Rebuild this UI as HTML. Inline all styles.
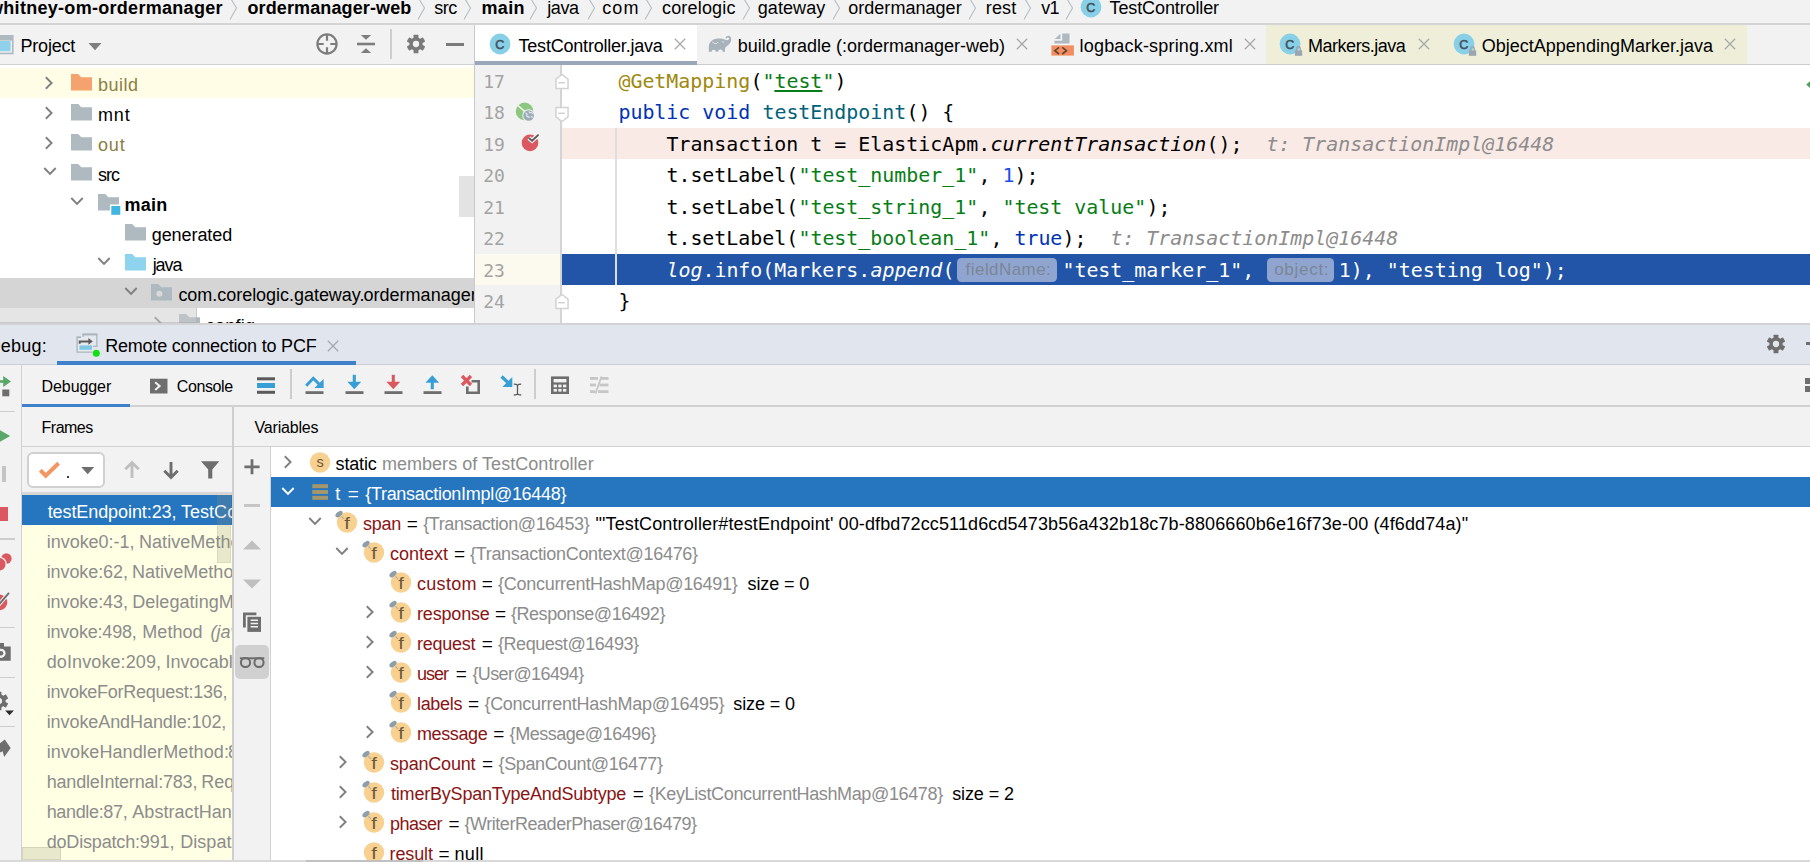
<!DOCTYPE html>
<html><head><meta charset="utf-8"><title>IDE debugger</title>
<style>
html,body{margin:0;padding:0}
body{width:1810px;height:862px;overflow:hidden;background:#f2f2f2;position:relative;font-family:'Liberation Sans', sans-serif}
#r{position:absolute;left:0;top:0;width:1810px;height:862px;overflow:hidden}
#r div,#r span,#r svg{position:absolute}
#r span{white-space:pre}
</style></head><body><div id="r">
<div style="left:0px;top:0px;width:1810px;height:23px;background:#f2f2f2;"></div>
<div style="left:0px;top:23px;width:1810px;height:2px;background:#d4d4d4;"></div>
<span style="left:-11px;top:-2.2px;font:700 18px 'Liberation Sans', sans-serif;line-height:20px;color:#000;letter-spacing:0.295px;">whitney-om-ordermanager</span>
<svg style="left:226.5px;top:-4px;" width="12" height="26" viewBox="0 0 12 26"><path d="M2.5 0.5 L9.5 12 L3 23.5" fill="none" stroke="#b4bcc4" stroke-width="1.1"/></svg>
<span style="left:247.5px;top:-2.2px;font:700 18px 'Liberation Sans', sans-serif;line-height:20px;color:#000;letter-spacing:0.12px;">ordermanager-web</span>
<svg style="left:414.5px;top:-4px;" width="12" height="26" viewBox="0 0 12 26"><path d="M2.5 0.5 L9.5 12 L3 23.5" fill="none" stroke="#b4bcc4" stroke-width="1.1"/></svg>
<span style="left:434.2px;top:-2.2px;font:400 18px 'Liberation Sans', sans-serif;line-height:20px;color:#000;letter-spacing:-0.45px;">src</span>
<svg style="left:461.3px;top:-4px;" width="12" height="26" viewBox="0 0 12 26"><path d="M2.5 0.5 L9.5 12 L3 23.5" fill="none" stroke="#b4bcc4" stroke-width="1.1"/></svg>
<span style="left:481.5px;top:-2.2px;font:700 18px 'Liberation Sans', sans-serif;line-height:20px;color:#000;letter-spacing:0.333px;">main</span>
<svg style="left:527px;top:-4px;" width="12" height="26" viewBox="0 0 12 26"><path d="M2.5 0.5 L9.5 12 L3 23.5" fill="none" stroke="#b4bcc4" stroke-width="1.1"/></svg>
<span style="left:547.3px;top:-2.2px;font:400 18px 'Liberation Sans', sans-serif;line-height:20px;color:#000;letter-spacing:-0.433px;">java</span>
<svg style="left:584.5px;top:-4px;" width="12" height="26" viewBox="0 0 12 26"><path d="M2.5 0.5 L9.5 12 L3 23.5" fill="none" stroke="#b4bcc4" stroke-width="1.1"/></svg>
<span style="left:602.3px;top:-2.2px;font:400 18px 'Liberation Sans', sans-serif;line-height:20px;color:#000;letter-spacing:1.05px;">com</span>
<svg style="left:641.6px;top:-4px;" width="12" height="26" viewBox="0 0 12 26"><path d="M2.5 0.5 L9.5 12 L3 23.5" fill="none" stroke="#b4bcc4" stroke-width="1.1"/></svg>
<span style="left:662px;top:-2.2px;font:400 18px 'Liberation Sans', sans-serif;line-height:20px;color:#000;letter-spacing:0.175px;">corelogic</span>
<svg style="left:740.2px;top:-4px;" width="12" height="26" viewBox="0 0 12 26"><path d="M2.5 0.5 L9.5 12 L3 23.5" fill="none" stroke="#b4bcc4" stroke-width="1.1"/></svg>
<span style="left:757.8px;top:-2.2px;font:400 18px 'Liberation Sans', sans-serif;line-height:20px;color:#000;letter-spacing:0.067px;">gateway</span>
<svg style="left:829.8px;top:-4px;" width="12" height="26" viewBox="0 0 12 26"><path d="M2.5 0.5 L9.5 12 L3 23.5" fill="none" stroke="#b4bcc4" stroke-width="1.1"/></svg>
<span style="left:848.2px;top:-2.2px;font:400 18px 'Liberation Sans', sans-serif;line-height:20px;color:#000;letter-spacing:0.036px;">ordermanager</span>
<svg style="left:966.4px;top:-4px;" width="12" height="26" viewBox="0 0 12 26"><path d="M2.5 0.5 L9.5 12 L3 23.5" fill="none" stroke="#b4bcc4" stroke-width="1.1"/></svg>
<span style="left:985.8px;top:-2.2px;font:400 18px 'Liberation Sans', sans-serif;line-height:20px;color:#000;letter-spacing:0.133px;">rest</span>
<svg style="left:1021px;top:-4px;" width="12" height="26" viewBox="0 0 12 26"><path d="M2.5 0.5 L9.5 12 L3 23.5" fill="none" stroke="#b4bcc4" stroke-width="1.1"/></svg>
<span style="left:1041.3px;top:-2.2px;font:400 18px 'Liberation Sans', sans-serif;line-height:20px;color:#000;letter-spacing:-0.7px;">v1</span>
<svg style="left:1063.4px;top:-4px;" width="12" height="26" viewBox="0 0 12 26"><path d="M2.5 0.5 L9.5 12 L3 23.5" fill="none" stroke="#b4bcc4" stroke-width="1.1"/></svg>
<svg style="left:1079.3px;top:-4.8px;" width="26" height="26" viewBox="0 0 26 26"><circle cx="12" cy="12" r="10.400" fill="#88cfe8"/><text x="11.900" y="16.500" text-anchor="middle" font-family="Liberation Sans, sans-serif" font-size="12.600" fill="#43525b" stroke="#43525b" stroke-width="0.550">C</text></svg>
<span style="left:1109.6px;top:-2.2px;font:400 18px 'Liberation Sans', sans-serif;line-height:20px;color:#000;letter-spacing:-0.123px;">TestController</span>
<div style="left:0px;top:25px;width:474px;height:39px;background:#f2f2f2;"></div>
<div style="left:0px;top:64px;width:474px;height:1px;background:#d1d1d1;"></div>
<div style="left:474px;top:25px;width:1px;height:298px;background:#c9c9c9;"></div>
<svg style="left:0px;top:34px;" width="15" height="22" viewBox="0 0 15 22"><rect x="-8" y="1" width="21.600" height="19.300" fill="#aeb9c0"/><rect x="-8" y="6.600" width="19.900" height="12" fill="#f4f6f7"/><rect x="-8" y="7" width="18.600" height="10.300" fill="#8fd0ea"/></svg>
<span style="left:20.5px;top:36.3px;font:400 18px 'Liberation Sans', sans-serif;line-height:20px;color:#000;letter-spacing:-0.2px;">Project</span>
<svg style="left:88px;top:40px;" width="16" height="12" viewBox="0 0 16 12"><path d="M0.500 2.900 H13.500 L7 10.200 Z" fill="#7f7f7f"/></svg>
<svg style="left:314px;top:31px;" width="26" height="26" viewBox="0 0 26 26"><circle cx="13" cy="13" r="9.6" fill="none" stroke="#7d7d7d" stroke-width="2.2"/><path d="M13 3.5v6.2M13 16.3v6.2M3.5 13h6.2M16.3 13h6.2" stroke="#7d7d7d" stroke-width="2.2"/></svg>
<svg style="left:355px;top:32px;" width="22" height="24" viewBox="0 0 22 24"><path d="M2 12h18" stroke="#7d7d7d" stroke-width="2.6"/><path d="M5.8 3h10.4L11 7.8Z M5.8 21h10.4L11 16.2Z" fill="#7d7d7d"/></svg>
<div style="left:390px;top:29px;width:2px;height:30px;background:#cdcdcd;"></div>
<svg style="left:404px;top:32px;" width="24" height="24" viewBox="0 0 24 24"><g transform="translate(12 12) scale(0.93)"><g fill="#7a7a7a"><rect x="-2.6" y="-10" width="5.2" height="20" rx="0.6" transform="rotate(0)"/><rect x="-2.6" y="-10" width="5.2" height="20" rx="0.6" transform="rotate(60)"/><rect x="-2.6" y="-10" width="5.2" height="20" rx="0.6" transform="rotate(120)"/></g><circle r="7.2" fill="#7a7a7a"/><circle r="3.4" fill="#f2f2f2"/></g></svg>
<div style="left:446px;top:42.5px;width:18px;height:3px;background:#7a7a7a;"></div>
<div style="left:0px;top:65px;width:474px;height:258px;overflow:hidden;background:#fff">
<div style="left:0px;top:3px;width:474px;height:30px;background:#fffde6;"></div>
<div style="left:0px;top:213px;width:474px;height:30px;background:#d5d5d5;"></div>
<svg style="left:43.3px;top:8.599999999999994px;" width="12" height="18" viewBox="0 0 12 18"><path d="M2.800 3.300 L8.600 9 L2.800 14.700" fill="none" stroke="#7f7f7f" stroke-width="1.900"/></svg>
<svg style="left:70.5px;top:9px;" width="24" height="22" viewBox="0 0 24 22"><path d="M0 0 H7.2 L10.3 3.3 H21 V16.4 H0 Z" fill="#f4a36f"/></svg>
<span style="left:97.9px;top:10px;font:400 18px 'Liberation Sans', sans-serif;line-height:20px;color:#8c7e42;letter-spacing:0.525px;">build</span>
<svg style="left:43.3px;top:38.599999999999994px;" width="12" height="18" viewBox="0 0 12 18"><path d="M2.800 3.300 L8.600 9 L2.800 14.700" fill="none" stroke="#7f7f7f" stroke-width="1.900"/></svg>
<svg style="left:70.5px;top:39px;" width="24" height="22" viewBox="0 0 24 22"><path d="M0 0 H7.2 L10.3 3.3 H21 V16.4 H0 Z" fill="#aeb9c0"/></svg>
<span style="left:97.9px;top:40px;font:400 18px 'Liberation Sans', sans-serif;line-height:20px;color:#000;letter-spacing:0.9px;">mnt</span>
<svg style="left:43.3px;top:68.6px;" width="12" height="18" viewBox="0 0 12 18"><path d="M2.800 3.300 L8.600 9 L2.800 14.700" fill="none" stroke="#7f7f7f" stroke-width="1.900"/></svg>
<svg style="left:70.5px;top:69px;" width="24" height="22" viewBox="0 0 24 22"><path d="M0 0 H7.2 L10.3 3.3 H21 V16.4 H0 Z" fill="#aeb9c0"/></svg>
<span style="left:97.9px;top:70px;font:400 18px 'Liberation Sans', sans-serif;line-height:20px;color:#8c7e42;letter-spacing:0.95px;">out</span>
<svg style="left:41.3px;top:100.19999999999999px;" width="18" height="12" viewBox="0 0 18 12"><path d="M3.300 3 L9 8.800 L14.700 3" fill="none" stroke="#7f7f7f" stroke-width="1.900"/></svg>
<svg style="left:70.5px;top:99px;" width="24" height="22" viewBox="0 0 24 22"><path d="M0 0 H7.2 L10.3 3.3 H21 V16.4 H0 Z" fill="#aeb9c0"/></svg>
<span style="left:97.9px;top:100px;font:400 18px 'Liberation Sans', sans-serif;line-height:20px;color:#000;letter-spacing:-0.95px;">src</span>
<svg style="left:68.3px;top:130.2px;" width="18" height="12" viewBox="0 0 18 12"><path d="M3.300 3 L9 8.800 L14.700 3" fill="none" stroke="#7f7f7f" stroke-width="1.900"/></svg>
<svg style="left:97.6px;top:129px;" width="24" height="22" viewBox="0 0 24 22"><path d="M0 0 H7.200 L10.300 3.300 H21 V10.600 H11.900 V16.400 H0 Z" fill="#aeb9c0"/><rect x="13.300" y="12" width="9" height="8.800" fill="#40b6e0"/></svg>
<span style="left:124.6px;top:130px;font:700 18px 'Liberation Sans', sans-serif;line-height:20px;color:#000;letter-spacing:0.233px;">main</span>
<svg style="left:124.6px;top:159px;" width="24" height="22" viewBox="0 0 24 22"><path d="M0 0 H7.2 L10.3 3.3 H21 V16.4 H0 Z" fill="#aeb9c0"/></svg>
<span style="left:151.7px;top:160px;font:400 18px 'Liberation Sans', sans-serif;line-height:20px;color:#000;letter-spacing:-0.062px;">generated</span>
<svg style="left:95.3px;top:190.2px;" width="18" height="12" viewBox="0 0 18 12"><path d="M3.300 3 L9 8.800 L14.700 3" fill="none" stroke="#7f7f7f" stroke-width="1.900"/></svg>
<svg style="left:124.6px;top:189px;" width="24" height="22" viewBox="0 0 24 22"><path d="M0 0 H7.2 L10.3 3.3 H21 V16.4 H0 Z" fill="#8fd4ee"/></svg>
<span style="left:152.7px;top:190px;font:400 18px 'Liberation Sans', sans-serif;line-height:20px;color:#000;letter-spacing:-1.1px;">java</span>
<svg style="left:122.30000000000001px;top:220.2px;" width="18" height="12" viewBox="0 0 18 12"><path d="M3.300 3 L9 8.800 L14.700 3" fill="none" stroke="#7f7f7f" stroke-width="1.900"/></svg>
<svg style="left:151.4px;top:219px;" width="24" height="22" viewBox="0 0 24 22"><path d="M0 0 H7.2 L10.3 3.3 H21 V16.4 H0 Z" fill="#aeb9c0"/><circle cx="8.400" cy="9.800" r="3" fill="#d9d9d9"/></svg>
<span style="left:178.4px;top:220px;font:400 18px 'Liberation Sans', sans-serif;line-height:20px;color:#000;letter-spacing:-0.033px;">com.corelogic.gateway.</span>
<span style="left:363.4px;top:220px;font:400 18px 'Liberation Sans', sans-serif;line-height:20px;color:#000;letter-spacing:0.036px;">ordermanager</span>
<svg style="left:151.5px;top:248.60000000000002px;" width="12" height="18" viewBox="0 0 12 18"><path d="M2.800 3.300 L8.600 9 L2.800 14.700" fill="none" stroke="#7f7f7f" stroke-width="1.900"/></svg>
<svg style="left:178.5px;top:249px;" width="24" height="22" viewBox="0 0 24 22"><path d="M0 0 H7.2 L10.3 3.3 H21 V16.4 H0 Z" fill="#aeb9c0"/></svg>
<span style="left:205.8px;top:250.6px;font:400 18px 'Liberation Sans', sans-serif;line-height:20px;color:#000;letter-spacing:0.24px;">config</span>
<div style="left:0px;top:243px;width:197px;height:14.5px;background:rgba(205,205,205,0.520);border-right:1px solid rgba(150,150,150,0.350);border-bottom:1px solid rgba(150,150,150,0.350);box-sizing:border-box"></div>
<div style="left:459px;top:110.5px;width:15px;height:41px;background:#e3e3e3;"></div>
</div>
<div style="left:0px;top:323px;width:1810px;height:2px;background:#d3d3d3;"></div>
<div style="left:475px;top:25px;width:1335px;height:36px;background:#f2f2f2;"></div>
<div style="left:475px;top:25px;width:222px;height:36px;background:#fff;"></div>
<div style="left:1265.7px;top:25px;width:481px;height:39px;background:#efefd9;"></div>
<div style="left:475px;top:64px;width:1335px;height:1px;background:#cccccc;"></div>
<div style="left:475px;top:65px;width:1335px;height:1px;background:#e2e2e2;"></div>
<div style="left:475px;top:61px;width:222px;height:4px;background:#9aa7bb;"></div>
<svg style="left:487.8px;top:32.2px;" width="26" height="26" viewBox="0 0 26 26"><circle cx="12" cy="12" r="10.400" fill="#88cfe8"/><text x="11.900" y="16.500" text-anchor="middle" font-family="Liberation Sans, sans-serif" font-size="12.600" fill="#43525b" stroke="#43525b" stroke-width="0.550">C</text></svg>
<span style="left:518.5px;top:35.8px;font:400 18px 'Liberation Sans', sans-serif;line-height:20px;color:#000;letter-spacing:-0.206px;">TestController.java</span>
<svg style="left:673px;top:37.3px;" width="14" height="14" viewBox="0 0 14 14"><path d="M1.8 1.8 L12.2 12.2 M12.2 1.8 L1.8 12.2" stroke="#a9a9a9" stroke-width="1.3" fill="none"/></svg>
<svg style="left:708px;top:35px;" width="25" height="19" viewBox="0 0 25 19"><path d="M0.800 16.800 V12 C0.800 8 3.500 4.600 8 3.800 C11 3.200 14.500 3.400 17 4.600 C18.500 5.400 20 5.600 20.800 4.600 C21.600 3.600 21 2.500 19.900 2.500 C19.200 2.500 18.800 2.900 18.600 3.400 L17.500 2.700 C17.900 1.600 19 0.800 20.300 0.800 C22.300 0.800 23.400 2.700 23.200 4.800 C22.900 7.500 21 9.800 18.800 11.200 C17.600 12 17 12.800 17 14 V16.800 H14.700 A2.300 2.300 0 0 0 10.100 16.800 H7.800 A2.100 2.100 0 0 0 3.600 16.800 Z" fill="#a7b2ba"/><path d="M4.600 6.600 C5.500 9.200 8.600 9.200 10.200 7" stroke="#f2f2f2" stroke-width="0.900" fill="none"/><circle cx="15" cy="7" r="0.700" fill="#f2f2f2"/></svg>
<span style="left:737.8px;top:35.8px;font:400 18px 'Liberation Sans', sans-serif;line-height:20px;color:#000;letter-spacing:0.006px;">build.gradle (:ordermanager-web)</span>
<svg style="left:1014.5px;top:37.3px;" width="14" height="14" viewBox="0 0 14 14"><path d="M1.8 1.8 L12.2 12.2 M12.2 1.8 L1.8 12.2" stroke="#a9a9a9" stroke-width="1.3" fill="none"/></svg>
<svg style="left:1050px;top:33px;" width="26" height="24" viewBox="0 0 26 24"><path d="M12.300 0.400 H19.500 V10.600 H4.400 V7.800 H12.300 Z" fill="#aeb8bf"/><path d="M4.800 5.900 L10.400 0.800 V5.900 Z" fill="#aeb8bf"/><rect x="1.400" y="12.400" width="22.500" height="10.200" fill="#f18d5f"/><path d="M9 14.300 L4.800 17.700 L9 21 M12.300 14.300 L16.500 17.700 L12.300 21" stroke="#5f4335" stroke-width="1.600" fill="none"/></svg>
<span style="left:1079.6px;top:35.8px;font:400 18px 'Liberation Sans', sans-serif;line-height:20px;color:#000;letter-spacing:0.182px;">logback-spring.xml</span>
<svg style="left:1243.4px;top:37.3px;" width="14" height="14" viewBox="0 0 14 14"><path d="M1.8 1.8 L12.2 12.2 M12.2 1.8 L1.8 12.2" stroke="#a9a9a9" stroke-width="1.3" fill="none"/></svg>
<svg style="left:1277.7px;top:32px;" width="26" height="26" viewBox="0 0 26 26"><circle cx="12" cy="12" r="10.400" fill="#88cfe8"/><text x="11.900" y="16.500" text-anchor="middle" font-family="Liberation Sans, sans-serif" font-size="12.600" fill="#43525b" stroke="#43525b" stroke-width="0.550">C</text><rect x="16.800" y="18.300" width="7.400" height="5.500" fill="#9aa5af"/><path d="M18.800 18.800v-2.300a1.700 1.700 0 0 1 3.400 0v2.300" fill="none" stroke="#9aa5af" stroke-width="1.400"/></svg>
<span style="left:1308px;top:35.8px;font:400 18px 'Liberation Sans', sans-serif;line-height:20px;color:#000;letter-spacing:-0.473px;">Markers.java</span>
<svg style="left:1417.2px;top:37.3px;" width="14" height="14" viewBox="0 0 14 14"><path d="M1.8 1.8 L12.2 12.2 M12.2 1.8 L1.8 12.2" stroke="#a9a9a9" stroke-width="1.3" fill="none"/></svg>
<svg style="left:1452px;top:32px;" width="26" height="26" viewBox="0 0 26 26"><circle cx="12" cy="12" r="10.400" fill="#88cfe8"/><text x="11.900" y="16.500" text-anchor="middle" font-family="Liberation Sans, sans-serif" font-size="12.600" fill="#43525b" stroke="#43525b" stroke-width="0.550">C</text><rect x="16.800" y="18.300" width="7.400" height="5.500" fill="#9aa5af"/><path d="M18.800 18.800v-2.300a1.700 1.700 0 0 1 3.400 0v2.300" fill="none" stroke="#9aa5af" stroke-width="1.400"/></svg>
<span style="left:1481.7px;top:35.8px;font:400 18px 'Liberation Sans', sans-serif;line-height:20px;color:#000;letter-spacing:0.012px;">ObjectAppendingMarker.java</span>
<svg style="left:1723.2px;top:37.3px;" width="14" height="14" viewBox="0 0 14 14"><path d="M1.8 1.8 L12.2 12.2 M12.2 1.8 L1.8 12.2" stroke="#a9a9a9" stroke-width="1.3" fill="none"/></svg>
<div style="left:475px;top:65px;width:86px;height:258px;background:#f2f2f2;"></div>
<div style="left:561px;top:65px;width:1249px;height:258px;background:#fff;"></div>
<div style="left:562px;top:128px;width:1248px;height:31px;background:#faeae6;"></div>
<div style="left:475px;top:254px;width:85px;height:31px;background:#fcfaee;"></div>
<div style="left:560px;top:65px;width:2px;height:258px;background:#d4d4d4;"></div>
<div style="left:562px;top:254px;width:1248px;height:31px;background:#2255a7;"></div>
<div style="left:615.3px;top:128px;width:1.6px;height:157px;background:#dedede;"></div>
<div style="left:615.3px;top:254px;width:1.6px;height:31px;background:#dcdcdc;"></div>
<span style="left:483.2px;top:70.9px;font:400 18px 'DejaVu Sans Mono', 'Liberation Mono', monospace;line-height:21px;color:#a3a3a3;letter-spacing:-0.04px;">17</span>
<span style="left:483.2px;top:102.4px;font:400 18px 'DejaVu Sans Mono', 'Liberation Mono', monospace;line-height:21px;color:#a3a3a3;letter-spacing:-0.04px;">18</span>
<span style="left:483.2px;top:133.9px;font:400 18px 'DejaVu Sans Mono', 'Liberation Mono', monospace;line-height:21px;color:#a3a3a3;letter-spacing:-0.04px;">19</span>
<span style="left:483.2px;top:165.4px;font:400 18px 'DejaVu Sans Mono', 'Liberation Mono', monospace;line-height:21px;color:#a3a3a3;letter-spacing:-0.04px;">20</span>
<span style="left:483.2px;top:196.9px;font:400 18px 'DejaVu Sans Mono', 'Liberation Mono', monospace;line-height:21px;color:#a3a3a3;letter-spacing:-0.04px;">21</span>
<span style="left:483.2px;top:228.4px;font:400 18px 'DejaVu Sans Mono', 'Liberation Mono', monospace;line-height:21px;color:#a3a3a3;letter-spacing:-0.04px;">22</span>
<span style="left:483.2px;top:259.9px;font:400 18px 'DejaVu Sans Mono', 'Liberation Mono', monospace;line-height:21px;color:#a3a3a3;letter-spacing:-0.04px;">23</span>
<span style="left:483.2px;top:291.4px;font:400 18px 'DejaVu Sans Mono', 'Liberation Mono', monospace;line-height:21px;color:#a3a3a3;letter-spacing:-0.04px;">24</span>
<span style="left:618.4px;top:69.9px;font:400 19.93px 'DejaVu Sans Mono', 'Liberation Mono', monospace;line-height:23px;color:#9e880d;">@GetMapping</span>
<span style="left:750.4px;top:69.9px;font:400 19.93px 'DejaVu Sans Mono', 'Liberation Mono', monospace;line-height:23px;color:#000;">(</span>
<span style="left:762.4px;top:69.9px;font:400 19.93px 'DejaVu Sans Mono', 'Liberation Mono', monospace;line-height:23px;color:#067d17;">"</span>
<span style="left:774.4px;top:69.9px;font:400 19.93px 'DejaVu Sans Mono', 'Liberation Mono', monospace;line-height:23px;color:#067d17;text-decoration:underline;text-decoration-thickness:1.5px;text-underline-offset:1.5px;">test</span>
<span style="left:822.4px;top:69.9px;font:400 19.93px 'DejaVu Sans Mono', 'Liberation Mono', monospace;line-height:23px;color:#067d17;">"</span>
<span style="left:834.4px;top:69.9px;font:400 19.93px 'DejaVu Sans Mono', 'Liberation Mono', monospace;line-height:23px;color:#000;">)</span>
<span style="left:618.4px;top:101.4px;font:400 19.93px 'DejaVu Sans Mono', 'Liberation Mono', monospace;line-height:23px;color:#0033b3;">public void </span>
<span style="left:762.4px;top:101.4px;font:400 19.93px 'DejaVu Sans Mono', 'Liberation Mono', monospace;line-height:23px;color:#00627a;">testEndpoint</span>
<span style="left:906.4px;top:101.4px;font:400 19.93px 'DejaVu Sans Mono', 'Liberation Mono', monospace;line-height:23px;color:#000;">() {</span>
<span style="left:666.4px;top:132.9px;font:400 19.93px 'DejaVu Sans Mono', 'Liberation Mono', monospace;line-height:23px;color:#000;">Transaction t = ElasticApm.</span>
<span style="left:990.4px;top:132.9px;font:italic 400 19.93px 'DejaVu Sans Mono', 'Liberation Mono', monospace;line-height:23px;color:#000;">currentTransaction</span>
<span style="left:1206.4px;top:132.9px;font:400 19.93px 'DejaVu Sans Mono', 'Liberation Mono', monospace;line-height:23px;color:#000;">();</span>
<span style="left:1266.4px;top:132.9px;font:italic 400 19.93px 'DejaVu Sans Mono', 'Liberation Mono', monospace;line-height:23px;color:#8c8c8c;">t: TransactionImpl@16448</span>
<span style="left:666.4px;top:164.4px;font:400 19.93px 'DejaVu Sans Mono', 'Liberation Mono', monospace;line-height:23px;color:#000;">t.setLabel(</span>
<span style="left:798.4px;top:164.4px;font:400 19.93px 'DejaVu Sans Mono', 'Liberation Mono', monospace;line-height:23px;color:#067d17;">"test_number_1"</span>
<span style="left:978.4px;top:164.4px;font:400 19.93px 'DejaVu Sans Mono', 'Liberation Mono', monospace;line-height:23px;color:#000;">, </span>
<span style="left:1002.4px;top:164.4px;font:400 19.93px 'DejaVu Sans Mono', 'Liberation Mono', monospace;line-height:23px;color:#1750eb;">1</span>
<span style="left:1014.4px;top:164.4px;font:400 19.93px 'DejaVu Sans Mono', 'Liberation Mono', monospace;line-height:23px;color:#000;">);</span>
<span style="left:666.4px;top:195.9px;font:400 19.93px 'DejaVu Sans Mono', 'Liberation Mono', monospace;line-height:23px;color:#000;">t.setLabel(</span>
<span style="left:798.4px;top:195.9px;font:400 19.93px 'DejaVu Sans Mono', 'Liberation Mono', monospace;line-height:23px;color:#067d17;">"test_string_1"</span>
<span style="left:978.4px;top:195.9px;font:400 19.93px 'DejaVu Sans Mono', 'Liberation Mono', monospace;line-height:23px;color:#000;">, </span>
<span style="left:1002.4px;top:195.9px;font:400 19.93px 'DejaVu Sans Mono', 'Liberation Mono', monospace;line-height:23px;color:#067d17;">"test value"</span>
<span style="left:1146.4px;top:195.9px;font:400 19.93px 'DejaVu Sans Mono', 'Liberation Mono', monospace;line-height:23px;color:#000;">);</span>
<span style="left:666.4px;top:227.4px;font:400 19.93px 'DejaVu Sans Mono', 'Liberation Mono', monospace;line-height:23px;color:#000;">t.setLabel(</span>
<span style="left:798.4px;top:227.4px;font:400 19.93px 'DejaVu Sans Mono', 'Liberation Mono', monospace;line-height:23px;color:#067d17;">"test_boolean_1"</span>
<span style="left:990.4px;top:227.4px;font:400 19.93px 'DejaVu Sans Mono', 'Liberation Mono', monospace;line-height:23px;color:#000;">, </span>
<span style="left:1014.4px;top:227.4px;font:400 19.93px 'DejaVu Sans Mono', 'Liberation Mono', monospace;line-height:23px;color:#0033b3;">true</span>
<span style="left:1062.4px;top:227.4px;font:400 19.93px 'DejaVu Sans Mono', 'Liberation Mono', monospace;line-height:23px;color:#000;">);</span>
<span style="left:1110.4px;top:227.4px;font:italic 400 19.93px 'DejaVu Sans Mono', 'Liberation Mono', monospace;line-height:23px;color:#8c8c8c;">t: TransactionImpl@16448</span>
<span style="left:666.4px;top:258.9px;font:italic 400 19.93px 'DejaVu Sans Mono', 'Liberation Mono', monospace;line-height:23px;color:#fff;">log</span>
<span style="left:702.4px;top:258.9px;font:400 19.93px 'DejaVu Sans Mono', 'Liberation Mono', monospace;line-height:23px;color:#fff;">.info(Markers.</span>
<span style="left:870.4px;top:258.9px;font:italic 400 19.93px 'DejaVu Sans Mono', 'Liberation Mono', monospace;line-height:23px;color:#fff;">append</span>
<span style="left:942.4px;top:258.9px;font:400 19.93px 'DejaVu Sans Mono', 'Liberation Mono', monospace;line-height:23px;color:#fff;">(</span>
<div style="left:957.2px;top:257.5px;width:100.3px;height:24.3px;background:#8fa5d0;border-radius:4.5px"></div>
<span style="left:965.6px;top:260.3px;font:400 17px 'Liberation Sans', sans-serif;line-height:19px;color:#7b8696;letter-spacing:0.444px;">fieldName:</span>
<span style="left:1062.4px;top:258.9px;font:400 19.93px 'DejaVu Sans Mono', 'Liberation Mono', monospace;line-height:23px;color:#fff;">"test_marker_1", </span>
<div style="left:1267.4px;top:257.5px;width:67.1px;height:24.3px;background:#8fa5d0;border-radius:4.5px"></div>
<span style="left:1274.2px;top:260.3px;font:400 17px 'Liberation Sans', sans-serif;line-height:19px;color:#7b8696;letter-spacing:0.717px;">object:</span>
<span style="left:1338.8px;top:258.9px;font:400 19.93px 'DejaVu Sans Mono', 'Liberation Mono', monospace;line-height:23px;color:#fff;">1), "testing log");</span>
<span style="left:618.4px;top:290.4px;font:400 19.93px 'DejaVu Sans Mono', 'Liberation Mono', monospace;line-height:23px;color:#000;">}</span>
<svg style="left:553.3px;top:72.3px;" width="18" height="20" viewBox="0 0 18 20"><path d="M2.950 16.550 V7.100 L9 2.500 L15.050 7.100 V16.550 Z" fill="#fff" stroke="#d2d2d2" stroke-width="1.500"/><path d="M5.200 10.700 H12" stroke="#d2d2d2" stroke-width="1.500"/></svg>
<svg style="left:553.3px;top:104.6px;" width="18" height="20" viewBox="0 0 18 20"><path d="M2.950 2.450 V11.900 L9 16.500 L15.050 11.900 V2.450 Z" fill="#fff" stroke="#d2d2d2" stroke-width="1.500"/><path d="M5.200 8.300 H12" stroke="#d2d2d2" stroke-width="1.500"/></svg>
<svg style="left:553.3px;top:292.1px;" width="18" height="20" viewBox="0 0 18 20"><path d="M2.950 16.550 V7.100 L9 2.500 L15.050 7.100 V16.550 Z" fill="#fff" stroke="#d2d2d2" stroke-width="1.500"/><path d="M5.200 10.700 H12" stroke="#d2d2d2" stroke-width="1.500"/></svg>
<svg style="left:514px;top:101px;" width="24" height="24" viewBox="0 0 24 24"><circle cx="10.600" cy="10.400" r="8.800" fill="#8cc77f"/><path d="M10.600 10.400 L3.800 4.400" stroke="#f2f2f2" stroke-width="1.500"/><circle cx="14.600" cy="14.500" r="6.300" fill="#f2f2f2"/><circle cx="14.600" cy="14.500" r="5.300" fill="#9aabb8"/><path d="M11.300 12.200 c1.300 -0.200 2 .8 1.500 1.800 s.3 1.700 1.200 1.500 s1.300 .6 .8 1.500 M15.200 10.300 c-.2 1 .6 1.500 1.500 1.300 s1.700 .4 2.300 1.200 M16.800 15.800 c.9 -.3 1.600 .1 1.700 1" stroke="#dfe6ea" stroke-width="1.300" fill="none"/></svg>
<svg style="left:519px;top:131px;" width="24" height="24" viewBox="0 0 24 24"><circle cx="11" cy="11.900" r="8.300" fill="#db5860"/><path d="M9.800 7 L13.100 9.700 L19.600 3.600" stroke="#f2f2f2" stroke-width="4.400" fill="none" stroke-linejoin="miter"/><path d="M9.800 7 L13.100 9.700 L19.600 3.600" stroke="#585858" stroke-width="1.800" fill="none"/></svg>
<svg style="left:1802px;top:78px;" width="8" height="14" viewBox="0 0 8 14"><path d="M4.200 6.600 L8 3.300 V9.900 Z" fill="#4ea35f"/></svg>
<div style="left:0px;top:325px;width:1810px;height:40px;background:#e1e5ee;"></div>
<div style="left:0px;top:364px;width:1810px;height:1px;background:#cbced4;"></div>
<div style="left:57px;top:360.6px;width:298.7px;height:4.2px;background:#3f80cb;"></div>
<span style="left:-12.5px;top:335.5px;font:400 18px 'Liberation Sans', sans-serif;line-height:20px;color:#000;letter-spacing:0.24px;">Debug:</span>
<svg style="left:75px;top:331px;" width="28" height="28" viewBox="0 0 28 28"><rect x="8.100" y="3.300" width="13.700" height="12" fill="#e4e8ee" stroke="#aab5bd" stroke-width="1.300"/><path d="M7.500 3.500 H22.400" stroke="#aab5bd" stroke-width="1.900"/><rect x="2.100" y="6" width="15.800" height="15.200" fill="#e6eaef"/><path d="M2.100 6 V21.200 H17.600" fill="none" stroke="#aab5bd" stroke-width="1.300"/><path d="M1.500 6.200 H6" stroke="#aab5bd" stroke-width="1.800"/><path d="M4.700 12.700 V10.500 H14" stroke="#5a5a5a" stroke-width="1.900" fill="none"/><path d="M13.400 7.100 L17.800 10.500 L13.400 13.800 Z" fill="#5a5a5a"/><rect x="4.500" y="14.400" width="12.500" height="4.400" fill="#7ec8e3"/><circle cx="21.300" cy="22.200" r="3.500" fill="#10e010"/></svg>
<span style="left:105.2px;top:335.5px;font:400 18px 'Liberation Sans', sans-serif;line-height:20px;color:#000;letter-spacing:-0.2px;">Remote connection to PCF</span>
<svg style="left:326px;top:339.2px;" width="14" height="14" viewBox="0 0 14 14"><path d="M1.8 1.8 L12.2 12.2 M12.2 1.8 L1.8 12.2" stroke="#a5a8ae" stroke-width="1.3" fill="none"/></svg>
<svg style="left:1764px;top:332px;" width="24" height="24" viewBox="0 0 24 24"><g transform="translate(12 12) scale(0.93)"><g fill="#6e6e6e"><rect x="-2.6" y="-10" width="5.2" height="20" rx="0.6" transform="rotate(0)"/><rect x="-2.6" y="-10" width="5.2" height="20" rx="0.6" transform="rotate(60)"/><rect x="-2.6" y="-10" width="5.2" height="20" rx="0.6" transform="rotate(120)"/></g><circle r="7.2" fill="#6e6e6e"/><circle r="3.4" fill="#e1e5ee"/></g></svg>
<div style="left:1806px;top:342.2px;width:6px;height:3px;background:#6e6e6e;"></div>
<div style="left:0px;top:365px;width:1810px;height:40px;background:#f2f2f2;"></div>
<div style="left:21px;top:365px;width:1px;height:497px;background:#d1d1d1;"></div>
<div style="left:22px;top:405px;width:1788px;height:1.6px;background:#d1d1d1;"></div>
<div style="left:22px;top:403.7px;width:108px;height:3.2px;background:#3f80cb;"></div>
<span style="left:41.6px;top:377.7px;font:400 16px 'Liberation Sans', sans-serif;line-height:17px;color:#000;letter-spacing:-0.086px;">Debugger</span>
<svg style="left:149px;top:377px;" width="20" height="18" viewBox="0 0 20 18"><rect x="1" y="1.700" width="17.500" height="14.800" fill="#6e6e6e"/><path d="M6.200 5.300 L10.600 9.100 L6.200 12.900" stroke="#f2f2f2" stroke-width="2" fill="none"/></svg>
<span style="left:176.7px;top:377.7px;font:400 16px 'Liberation Sans', sans-serif;line-height:17px;color:#000;letter-spacing:-0.367px;">Console</span>
<svg style="left:256px;top:376px;" width="20" height="20" viewBox="0 0 20 20"><rect x="1" y="1.300" width="18" height="3" fill="#5a5a5a"/><rect x="1" y="7" width="18" height="5" fill="#389fd6"/><rect x="1" y="14.800" width="18" height="3" fill="#5a5a5a"/></svg>
<div style="left:290.4px;top:369px;width:1.7px;height:29.5px;background:#cdcdcd;"></div>
<svg style="left:303.8px;top:374px;" width="22" height="22" viewBox="0 0 22 22"><rect x="1.500" y="17.200" width="18" height="2.800" fill="#6e6e6e"/><path d="M2.200 11.700 L9.300 4.300 L16 11" stroke="#389fd6" stroke-width="3" fill="none"/><path d="M10.400 13.900 H19.600 V4.900 Z" fill="#389fd6"/></svg>
<svg style="left:343.5px;top:374px;" width="22" height="22" viewBox="0 0 22 22"><rect x="1.500" y="17.200" width="18" height="2.800" fill="#6e6e6e"/><path d="M10.300 0.800 V10" stroke="#389fd6" stroke-width="3.100"/><path d="M3.400 7.800 H17.200 L10.300 15.200 Z" fill="#389fd6"/></svg>
<svg style="left:382.5px;top:374px;" width="22" height="22" viewBox="0 0 22 22"><rect x="1.500" y="17.200" width="18" height="2.800" fill="#6e6e6e"/><path d="M10.300 0.800 V10" stroke="#db5860" stroke-width="3.100"/><path d="M3.400 7.800 H17.200 L10.300 15.200 Z" fill="#db5860"/></svg>
<svg style="left:421.5px;top:374px;" width="22" height="22" viewBox="0 0 22 22"><rect x="1.500" y="17.200" width="18" height="2.800" fill="#6e6e6e"/><path d="M10.300 15.200 V6" stroke="#389fd6" stroke-width="3.100"/><path d="M3.400 8.700 H17.200 L10.300 1.300 Z" fill="#389fd6"/></svg>
<svg style="left:460px;top:374px;" width="22" height="22" viewBox="0 0 22 22"><path d="M2 2 L11 11 M11 2 L2 11" stroke="#db5860" stroke-width="3.300"/><path d="M11.500 7.300 H18.700 V18.700 H7.300 V12.500" stroke="#6e6e6e" stroke-width="2.600" fill="none"/></svg>
<svg style="left:499.5px;top:374px;" width="24" height="24" viewBox="0 0 24 24"><path d="M1.600 2.500 L9 9.600" stroke="#389fd6" stroke-width="3.300"/><path d="M12.300 3 V12.900 H2.400 Z" fill="#389fd6"/><path d="M13.800 10.100 C15.600 10.100 16.900 10.400 17.500 11.300 C18.100 10.400 19.400 10.100 21.200 10.100 M13.800 21 C15.600 21 16.900 20.700 17.500 19.800 C18.100 20.700 19.400 21 21.200 21 M17.500 11.300 V19.800" stroke="#5a5a5a" stroke-width="1.300" fill="none"/></svg>
<div style="left:534.4px;top:369px;width:1.7px;height:29.5px;background:#cdcdcd;"></div>
<svg style="left:550px;top:375px;" width="20" height="20" viewBox="0 0 20 20"><rect x="1" y="1.400" width="18" height="17.600" fill="#6e6e6e"/><rect x="3.600" y="4" width="12.800" height="3.400" fill="#f2f2f2"/><rect x="3.6" y="9.6" width="3.300" height="2.700" fill="#f2f2f2"/><rect x="3.6" y="13.899999999999999" width="3.300" height="2.700" fill="#f2f2f2"/><rect x="8.3" y="9.6" width="3.300" height="2.700" fill="#f2f2f2"/><rect x="8.3" y="13.899999999999999" width="3.300" height="2.700" fill="#f2f2f2"/><rect x="13.0" y="9.6" width="3.300" height="2.700" fill="#f2f2f2"/><rect x="13.0" y="13.899999999999999" width="3.300" height="2.700" fill="#f2f2f2"/></svg>
<svg style="left:589px;top:375px;" width="20" height="20" viewBox="0 0 20 20"><g fill="#c6c6c6"><rect x="1" y="2" width="8" height="2.800"/><rect x="12" y="2" width="7.500" height="2.800"/><rect x="1" y="8.600" width="6" height="2.800"/><rect x="10.500" y="8.600" width="9" height="2.800"/><rect x="1" y="15.200" width="5" height="2.800"/><rect x="9" y="15.200" width="10.500" height="2.800"/></g><path d="M12.500 1.500 L6.500 18.500" stroke="#c6c6c6" stroke-width="1.800"/></svg>
<div style="left:1805px;top:377.5px;width:6px;height:6px;background:#6e6e6e;"></div>
<div style="left:1805px;top:386px;width:6px;height:6.4px;background:#6e6e6e;"></div>
<svg style="left:0px;top:374px;" width="14" height="24" viewBox="0 0 14 24"><path d="M-4 7.500 H5" stroke="#59a869" stroke-width="2.600"/><path d="M3.200 2 L11 7.500 L3.200 13 Z" fill="#59a869"/><rect x="2.300" y="15.500" width="7" height="6.800" fill="#6e6e6e"/></svg>
<div style="left:0px;top:410.6px;width:14.5px;height:1.5px;background:#cdcdcd;"></div>
<svg style="left:0px;top:425px;" width="12" height="22" viewBox="0 0 12 22"><path d="M-6 2 L10.200 11 L-6 20 Z" fill="#59a869"/></svg>
<div style="left:1.5px;top:465.8px;width:4.3px;height:16.5px;background:#c4c4c4;"></div>
<div style="left:0px;top:506.8px;width:8.2px;height:14px;background:#db5860;"></div>
<div style="left:0px;top:538.2px;width:14.5px;height:1.5px;background:#cdcdcd;"></div>
<svg style="left:0px;top:550px;" width="14" height="24" viewBox="0 0 14 24"><circle cx="6.400" cy="8.500" r="5.200" fill="#db5860"/><circle cx="-0.800" cy="14.300" r="7" fill="#db5860" stroke="#f2f2f2" stroke-width="1.400"/></svg>
<svg style="left:0px;top:590px;" width="14" height="22" viewBox="0 0 14 22"><circle cx="-0.500" cy="12.400" r="7.800" fill="#db5860"/><path d="M-2 15.500 L9 2.800" stroke="#f2f2f2" stroke-width="4"/><path d="M-2 15.500 L9 2.800" stroke="#6e6e6e" stroke-width="1.900"/></svg>
<div style="left:0px;top:626.5px;width:14.5px;height:1.5px;background:#cdcdcd;"></div>
<svg style="left:0px;top:642px;" width="14" height="20" viewBox="0 0 14 20"><path d="M-8 4.500 H-1 V1 H4 V4.500 H10.700 V18.700 H-8 Z" fill="#6e6e6e"/><circle cx="1" cy="11.300" r="4.600" fill="#f2f2f2"/><circle cx="1" cy="11.300" r="2.300" fill="#6e6e6e"/></svg>
<div style="left:0px;top:676.5px;width:14.5px;height:1.5px;background:#cdcdcd;"></div>
<svg style="left:-13px;top:689px;" width="24" height="24" viewBox="0 0 24 24"><g transform="translate(12 12) scale(0.93)"><g fill="#6e6e6e"><rect x="-2.6" y="-10" width="5.2" height="20" rx="0.6" transform="rotate(0)"/><rect x="-2.6" y="-10" width="5.2" height="20" rx="0.6" transform="rotate(60)"/><rect x="-2.6" y="-10" width="5.2" height="20" rx="0.6" transform="rotate(120)"/></g><circle r="7.2" fill="#6e6e6e"/><circle r="3.4" fill="#f2f2f2"/></g></svg>
<svg style="left:5px;top:709.5px;" width="10" height="6" viewBox="0 0 10 6"><path d="M0.200 0.500 H8.900 L4.500 5.300 Z" fill="#2c2c2c"/></svg>
<div style="left:0px;top:725.5px;width:14.5px;height:1.5px;background:#cdcdcd;"></div>
<svg style="left:0px;top:738px;" width="14" height="20" viewBox="0 0 14 20"><path d="M-2 7 L4.800 1.400 L10.700 10 L4.200 19 L2.600 13.200 L-3 16 Z" fill="#6e6e6e"/></svg>
<div style="left:22px;top:406.6px;width:1788px;height:39.4px;background:#f2f2f2;"></div>
<div style="left:22px;top:446px;width:1788px;height:1px;background:#d1d1d1;"></div>
<span style="left:41.6px;top:418.7px;font:400 16px 'Liberation Sans', sans-serif;line-height:17px;color:#000;letter-spacing:-0.52px;">Frames</span>
<span style="left:254.5px;top:418.7px;font:400 16px 'Liberation Sans', sans-serif;line-height:17px;color:#000;letter-spacing:-0.188px;">Variables</span>
<div style="left:232px;top:407px;width:2px;height:455px;background:#cecece;"></div>
<div style="left:22px;top:447px;width:210px;height:45px;background:#f2f2f2;"></div>
<div style="left:22px;top:492px;width:210px;height:3px;background:#d6d6d6;"></div>
<div style="left:27px;top:452px;width:78px;height:36px;background:#fff;border:2px solid #d0d0d0;border-radius:6px;box-sizing:border-box"></div>
<svg style="left:37px;top:459px;" width="26" height="22" viewBox="0 0 26 22"><path d="M3.300 11.300 L8.700 16.600 L21.600 4.300" stroke="#f49661" stroke-width="4" fill="none"/></svg>
<div style="left:67px;top:476.3px;width:2.2px;height:2px;background:#3c3c3c;"></div>
<svg style="left:80px;top:465px;" width="16" height="11" viewBox="0 0 16 11"><path d="M1.300 2 H14.200 L7.700 9.300 Z" fill="#6e6e6e"/></svg>
<svg style="left:122.80000000000001px;top:460px;" width="18" height="20" viewBox="0 0 18 20"><path d="M9 18 V3 M2.300 9.300 L9 2.500 L15.700 9.300" stroke="#bfbfbf" stroke-width="2.900" fill="none"/></svg>
<svg style="left:162px;top:460px;" width="18" height="20" viewBox="0 0 18 20"><path d="M9 2 V17 M2.300 10.700 L9 17.500 L15.700 10.700" stroke="#6e6e6e" stroke-width="2.900" fill="none"/></svg>
<svg style="left:200px;top:460px;" width="22" height="20" viewBox="0 0 22 20"><path d="M1 1.200 H19.300 L12.300 9.500 V18.600 H8.200 V9.500 Z" fill="#6e6e6e"/></svg>
<div style="left:22px;top:495px;width:210px;height:365px;overflow:hidden;background:#ffffe4">
<div style="left:0px;top:0px;width:210px;height:30px;background:#2675bf;"></div>
<span style="left:25.7px;top:6.5px;font:400 18px 'Liberation Sans', sans-serif;line-height:20px;color:#fff;letter-spacing:-0.087px;">testEndpoint:23,</span>
<span style="left:158.9px;top:6.5px;font:400 18px 'Liberation Sans', sans-serif;line-height:20px;color:#fff;letter-spacing:0.05px;">TestController (com.corelogic.gateway.ordermanager.rest.v1)</span>
<span style="left:24.7px;top:36.5px;font:400 18px 'Liberation Sans', sans-serif;line-height:20px;color:#8c8c8c;letter-spacing:-0.02px;">invoke0:-1,</span>
<span style="left:117.0px;top:36.5px;font:400 18px 'Liberation Sans', sans-serif;line-height:20px;color:#8c8c8c;letter-spacing:0.05px;">NativeMethodAccessorImpl (jdk.internal.reflect)</span>
<span style="left:24.7px;top:66.5px;font:400 18px 'Liberation Sans', sans-serif;line-height:20px;color:#8c8c8c;letter-spacing:-0.089px;">invoke:62,</span>
<span style="left:109.9px;top:66.5px;font:400 18px 'Liberation Sans', sans-serif;line-height:20px;color:#8c8c8c;letter-spacing:0.05px;">NativeMethodAccessorImpl (jdk.internal.reflect)</span>
<span style="left:24.7px;top:96.5px;font:400 18px 'Liberation Sans', sans-serif;line-height:20px;color:#8c8c8c;letter-spacing:-0.089px;">invoke:43,</span>
<span style="left:110.2px;top:96.5px;font:400 18px 'Liberation Sans', sans-serif;line-height:20px;color:#8c8c8c;letter-spacing:0.05px;">DelegatingMethodAccessorImpl (jdk.internal.reflect)</span>
<span style="left:24.7px;top:126.5px;font:400 18px 'Liberation Sans', sans-serif;line-height:20px;color:#8c8c8c;letter-spacing:-0.2px;">invoke:498,</span>
<span style="left:120.3px;top:126.5px;font:400 18px 'Liberation Sans', sans-serif;line-height:20px;color:#8c8c8c;letter-spacing:0.05px;">Method</span>
<span style="left:188.5px;top:126.5px;font:italic 400 18px 'Liberation Sans', sans-serif;line-height:20px;color:#8c8c8c;">(java.lang.reflect)</span>
<span style="left:24.7px;top:156.5px;font:400 18px 'Liberation Sans', sans-serif;line-height:20px;color:#8c8c8c;letter-spacing:0.108px;">doInvoke:209,</span>
<span style="left:143.4px;top:156.5px;font:400 18px 'Liberation Sans', sans-serif;line-height:20px;color:#8c8c8c;letter-spacing:0.05px;">InvocableHandlerMethod (org.springframework.web.method.support)</span>
<span style="left:24.7px;top:186.5px;font:400 18px 'Liberation Sans', sans-serif;line-height:20px;color:#8c8c8c;letter-spacing:-0.27px;">invokeForRequest:136,</span>
<span style="left:209.7px;top:186.5px;font:400 18px 'Liberation Sans', sans-serif;line-height:20px;color:#8c8c8c;letter-spacing:0.05px;">InvocableHandlerMethod</span>
<span style="left:24.7px;top:216.5px;font:400 18px 'Liberation Sans', sans-serif;line-height:20px;color:#8c8c8c;letter-spacing:-0.079px;">invokeAndHandle:102,</span>
<span style="left:209.7px;top:216.5px;font:400 18px 'Liberation Sans', sans-serif;line-height:20px;color:#8c8c8c;letter-spacing:0.05px;">ServletInvocableHandlerMethod</span>
<span style="left:24.7px;top:246.5px;font:400 18px 'Liberation Sans', sans-serif;line-height:20px;color:#8c8c8c;letter-spacing:0.111px;">invokeHandlerMethod:</span>
<span style="left:206.0px;top:246.5px;font:400 18px 'Liberation Sans', sans-serif;line-height:20px;color:#8c8c8c;letter-spacing:0.05px;">878, RequestMappingHandlerAdapter</span>
<span style="left:24.7px;top:276.5px;font:400 18px 'Liberation Sans', sans-serif;line-height:20px;color:#8c8c8c;letter-spacing:-0.189px;">handleInternal:783,</span>
<span style="left:179.2px;top:276.5px;font:400 18px 'Liberation Sans', sans-serif;line-height:20px;color:#8c8c8c;letter-spacing:0.05px;">RequestMappingHandlerAdapter</span>
<span style="left:24.7px;top:306.5px;font:400 18px 'Liberation Sans', sans-serif;line-height:20px;color:#8c8c8c;letter-spacing:-0.344px;">handle:87,</span>
<span style="left:110.3px;top:306.5px;font:400 18px 'Liberation Sans', sans-serif;line-height:20px;color:#8c8c8c;letter-spacing:0.05px;">AbstractHandlerMethodAdapter</span>
<span style="left:24.7px;top:336.5px;font:400 18px 'Liberation Sans', sans-serif;line-height:20px;color:#8c8c8c;letter-spacing:-0.171px;">doDispatch:991,</span>
<span style="left:158.2px;top:336.5px;font:400 18px 'Liberation Sans', sans-serif;line-height:20px;color:#8c8c8c;letter-spacing:0.05px;">DispatcherServlet</span>
<div style="left:195px;top:0px;width:13.5px;height:67.7px;background:rgba(150,150,120,0.22);border:1px solid rgba(120,120,100,0.12);box-sizing:border-box"></div>
<div style="left:0px;top:351.5px;width:38.5px;height:13px;background:rgba(150,150,120,0.22);border:1px solid rgba(120,120,100,0.18);box-sizing:border-box"></div>
</div>
<div style="left:234px;top:447px;width:36px;height:413px;background:#f2f2f2;"></div>
<div style="left:270px;top:447px;width:1px;height:413px;background:#d1d1d1;"></div>
<svg style="left:242px;top:457px;" width="20" height="20" viewBox="0 0 20 20"><path d="M10 2.200 V17.300 M2.400 9.800 H17.600" stroke="#6e6e6e" stroke-width="2.800"/></svg>
<div style="left:244px;top:504.3px;width:15.5px;height:3px;background:#c6c6c6;"></div>
<svg style="left:242px;top:539px;" width="20" height="12" viewBox="0 0 20 12"><path d="M1 10.500 L10 1.500 L19 10.500 Z" fill="#bfbfbf"/></svg>
<svg style="left:242px;top:578px;" width="20" height="12" viewBox="0 0 20 12"><path d="M1 1.500 L10 10.500 L19 1.500 Z" fill="#bfbfbf"/></svg>
<svg style="left:241px;top:610px;" width="22" height="24" viewBox="0 0 22 24"><path d="M3.400 17.500 V3.800 H15.400" stroke="#6e6e6e" stroke-width="2.800" fill="none"/><rect x="6.400" y="6.800" width="13.600" height="15.100" fill="#6e6e6e"/><path d="M9.600 10.200 H17 M9.600 13.500 H17 M9.600 16.800 H17" stroke="#f2f2f2" stroke-width="1.400"/></svg>
<div style="left:235.2px;top:645px;width:33.7px;height:33.6px;background:#d0d0d0;border-radius:5px"></div>
<svg style="left:239px;top:654px;" width="27" height="16" viewBox="0 0 27 16"><path d="M0.900 4.300 H25.300" stroke="#6a6a6a" stroke-width="2"/><ellipse cx="6.500" cy="8.600" rx="4.600" ry="4.500" fill="none" stroke="#6a6a6a" stroke-width="2"/><ellipse cx="20" cy="8.600" rx="4.600" ry="4.500" fill="none" stroke="#6a6a6a" stroke-width="2"/></svg>
<div style="left:271px;top:447px;width:1539px;height:413px;background:#fff;"></div>
<div style="left:271px;top:477px;width:1539px;height:30px;background:#2675bf;"></div>
<svg style="left:282.3px;top:453px;" width="12" height="18" viewBox="0 0 12 18"><path d="M2.800 3.300 L8.600 9 L2.800 14.700" fill="none" stroke="#7f7f7f" stroke-width="1.900"/></svg>
<svg style="left:307.0px;top:449.2px;" width="26" height="26" viewBox="0 0 26 26"><circle cx="13" cy="13.500" r="10.200" fill="#f8d08f"/><text x="13" y="17.7" text-anchor="middle" transform="translate(13 0) scale(1 1) translate(-13 0)" font-family="Liberation Sans, sans-serif" font-size="14.5" fill="#6a583b">s</text></svg>
<span style="left:335.6px;top:453.7px;font:400 18px 'Liberation Sans', sans-serif;line-height:20px;color:#000;letter-spacing:-0.18px;">static</span>
<span style="left:381.9px;top:453.7px;font:400 18px 'Liberation Sans', sans-serif;line-height:20px;color:#8c8c8c;letter-spacing:0.042px;">members of TestController</span>
<svg style="left:279.4px;top:485px;" width="18" height="12" viewBox="0 0 18 12"><path d="M3.300 3 L9 8.800 L14.700 3" fill="none" stroke="#fff" stroke-width="1.900"/></svg>
<svg style="left:311px;top:483px;" width="18" height="18" viewBox="0 0 18 18"><rect x="1.300" y="1.200" width="15.700" height="4" fill="#a3976b"/><rect x="1.300" y="7" width="15.700" height="4" fill="#a3976b"/><rect x="1.300" y="12.800" width="15.700" height="4" fill="#a3976b"/></svg>
<span style="left:335.3px;top:483.7px;font:400 18px 'Liberation Sans', sans-serif;line-height:20px;color:#fff;">t</span>
<span style="left:347.8px;top:482.7px;font:400 19px 'Liberation Sans', sans-serif;line-height:21px;color:#fff;">=</span>
<span style="left:365.2px;top:483.7px;font:400 18px 'Liberation Sans', sans-serif;line-height:20px;color:#fff;letter-spacing:-0.291px;">{TransactionImpl@16448}</span>
<svg style="left:305.90000000000003px;top:515px;" width="18" height="12" viewBox="0 0 18 12"><path d="M3.300 3 L9 8.800 L14.700 3" fill="none" stroke="#7f7f7f" stroke-width="1.900"/></svg>
<svg style="left:334.0px;top:509.2px;" width="26" height="26" viewBox="0 0 26 26"><circle cx="13" cy="13.500" r="10.200" fill="#f8d08f"/><text x="13" y="19.8" text-anchor="middle" transform="translate(13 0) scale(1.22 1) translate(-13 0)" font-family="Liberation Sans, sans-serif" font-size="16.5" fill="#6a583b">f</text><ellipse cx="5" cy="5.100" rx="4.200" ry="2.400" transform="rotate(-40 5 5.100)" fill="#8e9ea9"/><path d="M7.500 7.300 L10 10" stroke="#9fb0bb" stroke-width="1.100"/></svg>
<span style="left:363.0px;top:513.7px;font:400 18px 'Liberation Sans', sans-serif;line-height:20px;color:#8a1414;letter-spacing:-0.233px;">span</span>
<span style="left:406.85px;top:512.7px;font:400 19px 'Liberation Sans', sans-serif;line-height:21px;color:#000;">=</span>
<span style="left:423.2px;top:513.7px;font:400 18px 'Liberation Sans', sans-serif;line-height:20px;color:#8c8c8c;letter-spacing:-0.4px;">{Transaction@16453}</span>
<span style="left:595.5px;top:513.7px;font:400 18px 'Liberation Sans', sans-serif;line-height:20px;color:#000;letter-spacing:0.119px;">"'TestController#testEndpoint' 00-dfbd72cc511d6cd5473b56a432b18c7b-8806660b6e16f73e-00 (4f6dd74a)"</span>
<svg style="left:332.90000000000003px;top:545px;" width="18" height="12" viewBox="0 0 18 12"><path d="M3.300 3 L9 8.800 L14.700 3" fill="none" stroke="#7f7f7f" stroke-width="1.900"/></svg>
<svg style="left:361.0px;top:539.2px;" width="26" height="26" viewBox="0 0 26 26"><circle cx="13" cy="13.500" r="10.200" fill="#f8d08f"/><text x="13" y="19.8" text-anchor="middle" transform="translate(13 0) scale(1.22 1) translate(-13 0)" font-family="Liberation Sans, sans-serif" font-size="16.5" fill="#6a583b">f</text><ellipse cx="5" cy="5.100" rx="4.200" ry="2.400" transform="rotate(-40 5 5.100)" fill="#8e9ea9"/><path d="M7.500 7.300 L10 10" stroke="#9fb0bb" stroke-width="1.100"/></svg>
<span style="left:390.0px;top:543.7px;font:400 18px 'Liberation Sans', sans-serif;line-height:20px;color:#8a1414;">context</span>
<span style="left:454.1px;top:542.7px;font:400 19px 'Liberation Sans', sans-serif;line-height:21px;color:#000;">=</span>
<span style="left:470px;top:543.7px;font:400 18px 'Liberation Sans', sans-serif;line-height:20px;color:#8c8c8c;letter-spacing:-0.308px;">{TransactionContext@16476}</span>
<svg style="left:388.0px;top:569.2px;" width="26" height="26" viewBox="0 0 26 26"><circle cx="13" cy="13.500" r="10.200" fill="#f8d08f"/><text x="13" y="19.8" text-anchor="middle" transform="translate(13 0) scale(1.22 1) translate(-13 0)" font-family="Liberation Sans, sans-serif" font-size="16.5" fill="#6a583b">f</text><ellipse cx="5" cy="5.100" rx="4.200" ry="2.400" transform="rotate(-40 5 5.100)" fill="#8e9ea9"/><path d="M7.500 7.300 L10 10" stroke="#9fb0bb" stroke-width="1.100"/></svg>
<span style="left:417.0px;top:573.7px;font:400 18px 'Liberation Sans', sans-serif;line-height:20px;color:#8a1414;letter-spacing:0.3px;">custom</span>
<span style="left:481.85px;top:572.7px;font:400 19px 'Liberation Sans', sans-serif;line-height:21px;color:#000;">=</span>
<span style="left:498px;top:573.7px;font:400 18px 'Liberation Sans', sans-serif;line-height:20px;color:#8c8c8c;letter-spacing:-0.275px;">{ConcurrentHashMap@16491}</span>
<span style="left:747.5px;top:573.7px;font:400 18px 'Liberation Sans', sans-serif;line-height:20px;color:#000;letter-spacing:-0.114px;">size = 0</span>
<svg style="left:363.6px;top:603px;" width="12" height="18" viewBox="0 0 12 18"><path d="M2.800 3.300 L8.600 9 L2.800 14.700" fill="none" stroke="#7f7f7f" stroke-width="1.900"/></svg>
<svg style="left:388.0px;top:599.2px;" width="26" height="26" viewBox="0 0 26 26"><circle cx="13" cy="13.500" r="10.200" fill="#f8d08f"/><text x="13" y="19.8" text-anchor="middle" transform="translate(13 0) scale(1.22 1) translate(-13 0)" font-family="Liberation Sans, sans-serif" font-size="16.5" fill="#6a583b">f</text><ellipse cx="5" cy="5.100" rx="4.200" ry="2.400" transform="rotate(-40 5 5.100)" fill="#8e9ea9"/><path d="M7.500 7.300 L10 10" stroke="#9fb0bb" stroke-width="1.100"/></svg>
<span style="left:417.0px;top:603.7px;font:400 18px 'Liberation Sans', sans-serif;line-height:20px;color:#8a1414;letter-spacing:-0.171px;">response</span>
<span style="left:495.0px;top:602.7px;font:400 19px 'Liberation Sans', sans-serif;line-height:21px;color:#000;">=</span>
<span style="left:511px;top:603.7px;font:400 18px 'Liberation Sans', sans-serif;line-height:20px;color:#8c8c8c;letter-spacing:-0.467px;">{Response@16492}</span>
<svg style="left:363.6px;top:633px;" width="12" height="18" viewBox="0 0 12 18"><path d="M2.800 3.300 L8.600 9 L2.800 14.700" fill="none" stroke="#7f7f7f" stroke-width="1.900"/></svg>
<svg style="left:388.0px;top:629.2px;" width="26" height="26" viewBox="0 0 26 26"><circle cx="13" cy="13.500" r="10.200" fill="#f8d08f"/><text x="13" y="19.8" text-anchor="middle" transform="translate(13 0) scale(1.22 1) translate(-13 0)" font-family="Liberation Sans, sans-serif" font-size="16.5" fill="#6a583b">f</text><ellipse cx="5" cy="5.100" rx="4.200" ry="2.400" transform="rotate(-40 5 5.100)" fill="#8e9ea9"/><path d="M7.500 7.300 L10 10" stroke="#9fb0bb" stroke-width="1.100"/></svg>
<span style="left:417.0px;top:633.7px;font:400 18px 'Liberation Sans', sans-serif;line-height:20px;color:#8a1414;letter-spacing:-0.25px;">request</span>
<span style="left:481.85px;top:632.7px;font:400 19px 'Liberation Sans', sans-serif;line-height:21px;color:#000;">=</span>
<span style="left:498px;top:633.7px;font:400 18px 'Liberation Sans', sans-serif;line-height:20px;color:#8c8c8c;letter-spacing:-0.457px;">{Request@16493}</span>
<svg style="left:363.6px;top:663px;" width="12" height="18" viewBox="0 0 12 18"><path d="M2.800 3.300 L8.600 9 L2.800 14.700" fill="none" stroke="#7f7f7f" stroke-width="1.900"/></svg>
<svg style="left:388.0px;top:659.2px;" width="26" height="26" viewBox="0 0 26 26"><circle cx="13" cy="13.500" r="10.200" fill="#f8d08f"/><text x="13" y="19.8" text-anchor="middle" transform="translate(13 0) scale(1.22 1) translate(-13 0)" font-family="Liberation Sans, sans-serif" font-size="16.5" fill="#6a583b">f</text><ellipse cx="5" cy="5.100" rx="4.200" ry="2.400" transform="rotate(-40 5 5.100)" fill="#8e9ea9"/><path d="M7.500 7.300 L10 10" stroke="#9fb0bb" stroke-width="1.100"/></svg>
<span style="left:417.0px;top:663.7px;font:400 18px 'Liberation Sans', sans-serif;line-height:20px;color:#8a1414;letter-spacing:-1.0px;">user</span>
<span style="left:455.8px;top:662.7px;font:400 19px 'Liberation Sans', sans-serif;line-height:21px;color:#000;">=</span>
<span style="left:472.4px;top:663.7px;font:400 18px 'Liberation Sans', sans-serif;line-height:20px;color:#8c8c8c;letter-spacing:-0.6px;">{User@16494}</span>
<svg style="left:388.0px;top:689.2px;" width="26" height="26" viewBox="0 0 26 26"><circle cx="13" cy="13.500" r="10.200" fill="#f8d08f"/><text x="13" y="19.8" text-anchor="middle" transform="translate(13 0) scale(1.22 1) translate(-13 0)" font-family="Liberation Sans, sans-serif" font-size="16.5" fill="#6a583b">f</text><ellipse cx="5" cy="5.100" rx="4.200" ry="2.400" transform="rotate(-40 5 5.100)" fill="#8e9ea9"/><path d="M7.500 7.300 L10 10" stroke="#9fb0bb" stroke-width="1.100"/></svg>
<span style="left:417.0px;top:693.7px;font:400 18px 'Liberation Sans', sans-serif;line-height:20px;color:#8a1414;letter-spacing:-0.32px;">labels</span>
<span style="left:468.0px;top:692.7px;font:400 19px 'Liberation Sans', sans-serif;line-height:21px;color:#000;">=</span>
<span style="left:484.4px;top:693.7px;font:400 18px 'Liberation Sans', sans-serif;line-height:20px;color:#8c8c8c;letter-spacing:-0.267px;">{ConcurrentHashMap@16495}</span>
<span style="left:733.3px;top:693.7px;font:400 18px 'Liberation Sans', sans-serif;line-height:20px;color:#000;letter-spacing:-0.1px;">size = 0</span>
<svg style="left:363.6px;top:723px;" width="12" height="18" viewBox="0 0 12 18"><path d="M2.800 3.300 L8.600 9 L2.800 14.700" fill="none" stroke="#7f7f7f" stroke-width="1.900"/></svg>
<svg style="left:388.0px;top:719.2px;" width="26" height="26" viewBox="0 0 26 26"><circle cx="13" cy="13.500" r="10.200" fill="#f8d08f"/><text x="13" y="19.8" text-anchor="middle" transform="translate(13 0) scale(1.22 1) translate(-13 0)" font-family="Liberation Sans, sans-serif" font-size="16.5" fill="#6a583b">f</text><ellipse cx="5" cy="5.100" rx="4.200" ry="2.400" transform="rotate(-40 5 5.100)" fill="#8e9ea9"/><path d="M7.500 7.300 L10 10" stroke="#9fb0bb" stroke-width="1.100"/></svg>
<span style="left:417.0px;top:723.7px;font:400 18px 'Liberation Sans', sans-serif;line-height:20px;color:#8a1414;letter-spacing:-0.4px;">message</span>
<span style="left:493.2px;top:722.7px;font:400 19px 'Liberation Sans', sans-serif;line-height:21px;color:#000;">=</span>
<span style="left:509.6px;top:723.7px;font:400 18px 'Liberation Sans', sans-serif;line-height:20px;color:#8c8c8c;letter-spacing:-0.479px;">{Message@16496}</span>
<svg style="left:336.6px;top:753px;" width="12" height="18" viewBox="0 0 12 18"><path d="M2.800 3.300 L8.600 9 L2.800 14.700" fill="none" stroke="#7f7f7f" stroke-width="1.900"/></svg>
<svg style="left:361.0px;top:749.2px;" width="26" height="26" viewBox="0 0 26 26"><circle cx="13" cy="13.500" r="10.200" fill="#f8d08f"/><text x="13" y="19.8" text-anchor="middle" transform="translate(13 0) scale(1.22 1) translate(-13 0)" font-family="Liberation Sans, sans-serif" font-size="16.5" fill="#6a583b">f</text><ellipse cx="5" cy="5.100" rx="4.200" ry="2.400" transform="rotate(-40 5 5.100)" fill="#8e9ea9"/><path d="M7.500 7.300 L10 10" stroke="#9fb0bb" stroke-width="1.100"/></svg>
<span style="left:390.0px;top:753.7px;font:400 18px 'Liberation Sans', sans-serif;line-height:20px;color:#8a1414;letter-spacing:-0.188px;">spanCount</span>
<span style="left:482.1px;top:752.7px;font:400 19px 'Liberation Sans', sans-serif;line-height:21px;color:#000;">=</span>
<span style="left:498.5px;top:753.7px;font:400 18px 'Liberation Sans', sans-serif;line-height:20px;color:#8c8c8c;letter-spacing:-0.375px;">{SpanCount@16477}</span>
<svg style="left:336.6px;top:783px;" width="12" height="18" viewBox="0 0 12 18"><path d="M2.800 3.300 L8.600 9 L2.800 14.700" fill="none" stroke="#7f7f7f" stroke-width="1.900"/></svg>
<svg style="left:361.0px;top:779.2px;" width="26" height="26" viewBox="0 0 26 26"><circle cx="13" cy="13.500" r="10.200" fill="#f8d08f"/><text x="13" y="19.8" text-anchor="middle" transform="translate(13 0) scale(1.22 1) translate(-13 0)" font-family="Liberation Sans, sans-serif" font-size="16.5" fill="#6a583b">f</text><ellipse cx="5" cy="5.100" rx="4.200" ry="2.400" transform="rotate(-40 5 5.100)" fill="#8e9ea9"/><path d="M7.500 7.300 L10 10" stroke="#9fb0bb" stroke-width="1.100"/></svg>
<span style="left:391.0px;top:783.7px;font:400 18px 'Liberation Sans', sans-serif;line-height:20px;color:#8a1414;letter-spacing:-0.2px;">timerBySpanTypeAndSubtype</span>
<span style="left:632.7px;top:782.7px;font:400 19px 'Liberation Sans', sans-serif;line-height:21px;color:#000;">=</span>
<span style="left:649px;top:783.7px;font:400 18px 'Liberation Sans', sans-serif;line-height:20px;color:#8c8c8c;letter-spacing:-0.365px;">{KeyListConcurrentHashMap@16478}</span>
<span style="left:952.2px;top:783.7px;font:400 18px 'Liberation Sans', sans-serif;line-height:20px;color:#000;letter-spacing:-0.114px;">size = 2</span>
<svg style="left:336.6px;top:813px;" width="12" height="18" viewBox="0 0 12 18"><path d="M2.800 3.300 L8.600 9 L2.800 14.700" fill="none" stroke="#7f7f7f" stroke-width="1.900"/></svg>
<svg style="left:361.0px;top:809.2px;" width="26" height="26" viewBox="0 0 26 26"><circle cx="13" cy="13.500" r="10.200" fill="#f8d08f"/><text x="13" y="19.8" text-anchor="middle" transform="translate(13 0) scale(1.22 1) translate(-13 0)" font-family="Liberation Sans, sans-serif" font-size="16.5" fill="#6a583b">f</text><ellipse cx="5" cy="5.100" rx="4.200" ry="2.400" transform="rotate(-40 5 5.100)" fill="#8e9ea9"/><path d="M7.500 7.300 L10 10" stroke="#9fb0bb" stroke-width="1.100"/></svg>
<span style="left:390.0px;top:813.7px;font:400 18px 'Liberation Sans', sans-serif;line-height:20px;color:#8a1414;letter-spacing:-0.52px;">phaser</span>
<span style="left:448.55px;top:812.7px;font:400 19px 'Liberation Sans', sans-serif;line-height:21px;color:#000;">=</span>
<span style="left:464.5px;top:813.7px;font:400 18px 'Liberation Sans', sans-serif;line-height:20px;color:#8c8c8c;letter-spacing:-0.46px;">{WriterReaderPhaser@16479}</span>
<svg style="left:361.0px;top:839.2px;" width="26" height="26" viewBox="0 0 26 26"><circle cx="13" cy="13.500" r="10.200" fill="#f8d08f"/><text x="13" y="19.8" text-anchor="middle" transform="translate(13 0) scale(1.22 1) translate(-13 0)" font-family="Liberation Sans, sans-serif" font-size="16.5" fill="#6a583b">f</text></svg>
<span style="left:389.6px;top:843.7px;font:400 18px 'Liberation Sans', sans-serif;line-height:20px;color:#8a1414;letter-spacing:-0.14px;">result</span>
<span style="left:438.5px;top:842.7px;font:400 19px 'Liberation Sans', sans-serif;line-height:21px;color:#000;">=</span>
<span style="left:454.5px;top:843.7px;font:400 18px 'Liberation Sans', sans-serif;line-height:20px;color:#000;letter-spacing:0.333px;">null</span>
<div style="left:0px;top:860px;width:1810px;height:2px;background:#d9d9d9;"></div>
<div style="left:306px;top:860px;width:116.5px;height:2px;background:#c1c1c1;"></div>
</div></body></html>
